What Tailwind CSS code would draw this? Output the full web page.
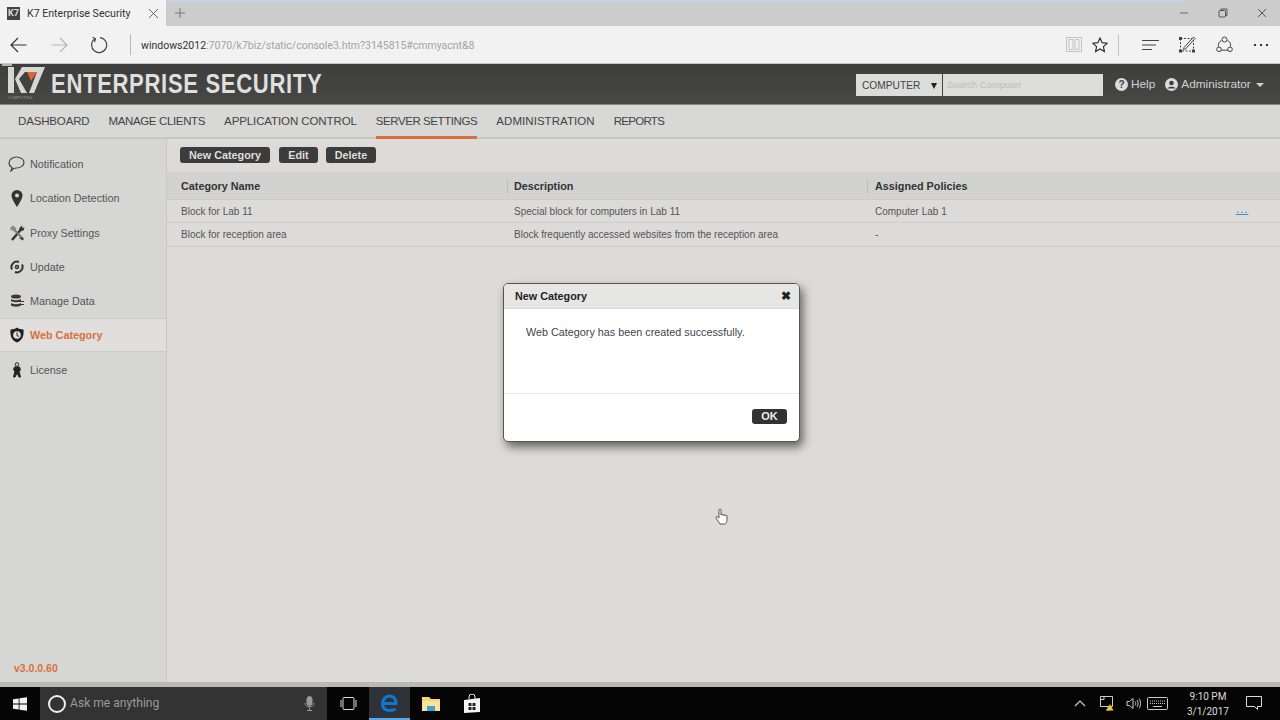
<!DOCTYPE html>
<html><head><meta charset="utf-8"><script src="https://cdn.jsdelivr.net/npm/@tailwindcss/browser@4"></script></head>
<body class="m-0">
<div class="relative w-[1280px] h-[720px] overflow-hidden flex flex-col bg-[#dcdbd9] font-['Liberation_Sans',Arial,sans-serif] text-[#444]">
  <!-- tab strip -->
  <div class="h-[26px] flex bg-[#cccccc] relative shrink-0 font-['Roboto',sans-serif]">
    <div class="absolute top-0 left-[96px] w-[1088px] h-[2px] bg-[#c3d3ea]"></div>
    <div class="relative w-[166px] h-[26px] bg-[#f2f2f2] flex items-center pl-[7px]">
      <div class="w-[13px] h-[13px] bg-[#444] flex items-center justify-center text-[9px] leading-none font-bold text-[#ddd]">K7</div>
      <span class="ml-[7px] mt-[1px] text-[10.600px] text-[#333] whitespace-nowrap">K7 Enterprise Security</span>
      <svg class="absolute left-[148px] top-[8px]" width="11" height="11" viewBox="0 0 11 11" stroke="#666" fill="none"><path d="M1 1l9 9M10 1l-9 9"/></svg>
    </div>
    <svg class="ml-[8px] mt-[7px]" width="12" height="12" viewBox="0 0 12 12" stroke="#777" fill="none"><path d="M6 1v10M1 6h10"/></svg>
    <div class="ml-auto flex items-center h-[26px]">
      <svg class="mr-[29px]" width="10" height="10" viewBox="0 0 10 10" stroke="#666" fill="none"><path d="M1 5h8"/></svg>
      <svg class="mr-[29px]" width="10" height="10" viewBox="0 0 10 10" stroke="#555" fill="none"><rect x="1" y="2.5" width="6.5" height="6.5" rx="1"/><path d="M3 2.5V1h6v6.5H7.5"/></svg>
      <svg class="mr-[13px]" width="10" height="10" viewBox="0 0 10 10" stroke="#555" fill="none"><path d="M1 1l8 8M9 1l-8 8"/></svg>
    </div>
  </div>
  <!-- address bar -->
  <div class="h-[38px] flex items-center bg-[#f2f2f2] shrink-0 relative border-b border-[#c8c8c8]">
    <svg class="ml-[10px]" width="17" height="16" viewBox="0 0 17 16" stroke="#333" stroke-width="1.2" fill="none"><path d="M16.5 8H1M8 1L1 8l7 7"/></svg>
    <svg class="ml-[24px]" width="17" height="16" viewBox="0 0 17 16" stroke="#b5b5b5" stroke-width="1.2" fill="none"><path d="M0.5 8H16M9 1l7 7-7 7"/></svg>
    <svg class="ml-[22px]" width="18" height="18" viewBox="0 0 18 18" stroke="#444" stroke-width="1.2" fill="none"><path d="M5 2.8A7.5 7.5 0 1 0 10 1.6"/><path d="M2.6 1.2L5.4 2.8 4.6 6"/></svg>
    <div class="ml-[22px] w-px h-[21px] bg-[#b8b8b8]"></div>
    <div class="ml-[10px] mt-[3px] text-[10.500px] font-['Roboto',sans-serif] whitespace-nowrap"><span class="text-[#333]">windows2012</span><span class="text-[#a3a3a3]">:7070/k7biz/static/console3.htm?3145815#cmmyacnt&amp;8</span></div>
    <div class="ml-auto flex items-center mr-[12px]">
      <svg width="16" height="15" viewBox="0 0 16 15" stroke="#c2c2c2" fill="none"><rect x="0.5" y="0.5" width="15" height="14"/><path d="M3 2.5h4v10H3zM9 2.5h4v10H9z"/></svg>
      <svg class="ml-[10px]" width="16" height="16" viewBox="0 0 16 16" stroke="#333" stroke-width="1.2" fill="none"><path d="M8 1l2.1 4.700 5 .5-3.700 3.400 1 5L8 12l-4.400 2.600 1-5L.9 6.200l5-.5z"/></svg>
      <div class="ml-[10px] w-px h-[22px] bg-[#c4c4c4]"></div>
      <svg class="ml-[23px]" width="17" height="12" viewBox="0 0 17 12" stroke="#444" fill="none"><path d="M0 1.500h17M0 6h14M0 10.500h10"/></svg>
      <svg class="ml-[20px]" width="17" height="17" viewBox="0 0 17 17" stroke="#444" fill="none"><rect x="1.500" y="2.500" width="13" height="12.500" stroke-dasharray="2 1.500"/><path d="M5 11.500L14.500 1l1.500 1.500L6.500 13 4.500 13.500z" fill="#f2f2f2"/><rect x="0.500" y="1.500" width="2" height="2" fill="#444"/><rect x="0.500" y="14" width="2" height="2" fill="#444"/><rect x="13.500" y="14" width="2" height="2" fill="#444"/></svg>
      <svg class="ml-[20px]" width="17" height="17" viewBox="0 0 17 17" stroke="#444" fill="none"><path d="M5.500 4.500A5.500 5.500 0 0 0 2.500 10.500M14.500 10.500A5.500 5.500 0 0 0 11.500 4.500M5 14.200h7"/><circle cx="8.500" cy="3.500" r="2.500"/><circle cx="3" cy="13.300" r="2.300"/><circle cx="14" cy="13.300" r="2.300"/></svg>
      <div class="ml-[21px] flex gap-[4px]"><i class="w-[2px] h-[2px] bg-[#333]"></i><i class="w-[2px] h-[2px] bg-[#333]"></i><i class="w-[2px] h-[2px] bg-[#333]"></i></div>
    </div>
  </div>
  <!-- app header -->
  <div class="h-[41px] flex items-center shrink-0 bg-gradient-to-b from-[#3e3e3d] to-[#474746] relative border-b border-[#888]">
    <svg class="shrink-0" width="46" height="40" viewBox="0 0 46 40"><rect x="2" y="0" width="10" height="2" fill="#b5b5b3"/><path d="M8 3h6v26H8z" fill="#d6d6d4"/><path d="M15 15L22 3h23L34 29h-5l8-21H25l-6 7 8 14h-6z" fill="#d6d6d4"/><path d="M27 8h10l-6 9z" fill="#d96a2c"/><text x="8" y="34.500" font-size="4" fill="#999" font-family="Liberation Sans">COMPUTING</text></svg>
    <span class="ml-[5px] text-[27px] leading-none font-bold text-[#dfdfdd] tracking-[0.8px] font-['Liberation_Sans',sans-serif] whitespace-nowrap scale-x-[0.818] origin-left">ENTERPRISE SECURITY</span>
    <div class="absolute left-[856px] top-[10px] flex items-center h-[22px]">
      <div class="w-[86px] h-[22px] bg-[#dcdcda] flex items-center pl-[6px] pt-[1px] text-[10.200px] text-[#444] relative">COMPUTER<i class="absolute left-[75px] top-[9px] w-0 h-0 border-x-[3.500px] border-x-transparent border-t-[6px] border-t-[#222]"></i></div>
      <div class="ml-px w-[160px] h-[22px] bg-[#dcdcda] flex items-center pl-[4px] text-[9.500px] text-[#bdbdbb]">Search Computer</div>
    </div>
    <div class="absolute left-[1115px] top-[12px] flex items-center text-[11.800px] text-[#cfcfcd]">
      <svg width="13" height="13" viewBox="0 0 13 13"><circle cx="6.500" cy="6.500" r="6.500" fill="#dcdcda"/><text x="6.500" y="10.200" font-size="10" font-weight="bold" text-anchor="middle" fill="#3f3f3e" font-family="Liberation Sans">?</text></svg>
      <span class="ml-[3px]">Help</span>
      <svg class="ml-[10px]" width="13" height="13" viewBox="0 0 13 13"><circle cx="6.500" cy="6.500" r="6.500" fill="#dcdcda"/><circle cx="6.500" cy="5" r="2.300" fill="#3f3f3e"/><path d="M2.500 10.500c.5-2.500 7.500-2.500 8 0z" fill="#3f3f3e"/></svg>
      <span class="ml-[3px]">Administrator</span>
      <i class="ml-[5px] mt-[1px] w-0 h-0 border-x-[4px] border-x-transparent border-t-[4px] border-t-[#cfcfcd]"></i>
    </div>
  </div>
  <!-- nav -->
  <div class="h-[34px] flex shrink-0 bg-[#d8d8d6] pl-[18px] gap-[19px] text-[11.500px] text-[#444] border-b-2 border-[#c6c6c4] whitespace-nowrap">
    <div class="pt-[8px] tracking-[-0.15px]">DASHBOARD</div>
    <div class="pt-[8px] tracking-[-0.36px]">MANAGE CLIENTS</div>
    <div class="pt-[8px] tracking-[-0.1px]">APPLICATION CONTROL</div>
    <div class="pt-[8px] h-[34px] border-b-[3px] border-[#d9703a] tracking-[-0.42px]">SERVER SETTINGS</div>
    <div class="pt-[8px] tracking-[0.06px]">ADMINISTRATION</div>
    <div class="pt-[8px] tracking-[-0.7px]">REPORTS</div>
  </div>
  <!-- body -->
  <div class="flex-1 flex min-h-0">
    <aside class="w-[167px] shrink-0 bg-[#d6d6d4] border-r border-[#c8c8c6] flex flex-col text-[10.800px] text-[#555] pt-[8px]">
      <div class="h-[34px] flex items-center pl-[8px]">
        <svg width="17" height="16" viewBox="0 0 17 16" fill="none" stroke="#444" stroke-width="1.200"><path d="M3 15l1-3.500C2 10.500 1 9 1 7c0-3.500 3.500-6 7.500-6S16 3.500 16 6.500 12.500 12 8.500 12c-1 0-2 0-3 .5z"/></svg>
        <span class="ml-[5px]">Notification</span>
      </div>
      <div class="h-[35px] flex items-center pl-[11px]">
        <svg width="12" height="17" viewBox="0 0 12 17"><path d="M6 0a5.500 5.500 0 0 0-5.500 5.500C.5 9 6 17 6 17s5.500-8 5.500-11.500A5.500 5.500 0 0 0 6 0zm0 7.500a2 2 0 1 1 0-4 2 2 0 0 1 0 4z" fill="#333"/></svg>
        <span class="ml-[7px]">Location Detection</span>
      </div>
      <div class="h-[34px] flex items-center pl-[9px]">
        <svg width="16" height="16" viewBox="0 0 16 16" fill="none"><path d="M3 15L12 4.500" stroke="#333" stroke-width="2.500"/><path d="M14 14L5 4.500" stroke="#777" stroke-width="2"/><path d="M1 3l3-2.500 3.500 3-2.500 2.500-3-1z" fill="#888"/><path d="M10 3.500l3-3 .5 2.500 2-.5-1 3-3 .5z" fill="#333"/><path d="M10 13l3-1 2 2-1.500 1.500z" fill="#444"/></svg>
        <span class="ml-[5px]">Proxy Settings</span>
      </div>
      <div class="h-[34px] flex items-center pl-[10px]">
        <svg width="14" height="14" viewBox="0 0 14 14" fill="none" stroke="#333" stroke-width="2"><path d="M2 9.500A5.500 5.500 0 0 1 9 2"/><path d="M12 4.500A5.500 5.500 0 0 1 5 12"/><circle cx="7" cy="7" r="1.500" stroke-width="1.500"/></svg>
        <span class="ml-[6px]">Update</span>
      </div>
      <div class="h-[34px] flex items-center pl-[10px]">
        <svg width="14" height="14" viewBox="0 0 14 14" fill="#3a3a3a"><ellipse cx="6" cy="2.500" rx="5" ry="2"/><path d="M1 5c1 1.500 9 1.500 10 0v2c-1 1.500-9 1.500-10 0zM1 9c1 1.500 9 1.500 10 0v2.500c-1 1.500-9 1.500-10 0z"/><path d="M8 7h6v1H8zM8 10h6v1H8z"/></svg>
        <span class="ml-[6px]">Manage Data</span>
      </div>
      <div class="h-[34px] flex items-center pl-[9px] bg-[#e0dfdd] border-y border-[#cbcbc9] font-bold text-[#d9703a]">
        <svg width="16" height="16" viewBox="0 0 16 16"><path d="M8 .5C6 2 4 2 1.500 2.500 1 8 2 13 8 15.500 14 13 15 8 14.500 2.500 12 2 10 2 8 .5z" fill="#222"/><circle cx="8" cy="8" r="3.800" fill="#e0dfdd"/><path d="M8 5.500v3l2 1" stroke="#222" fill="none"/></svg>
        <span class="ml-[5px]">Web Category</span>
      </div>
      <div class="h-[36px] flex items-center pl-[11px]">
        <svg width="12" height="16" viewBox="0 0 12 16" fill="none" stroke="#222"><circle cx="6" cy="2.500" r="1.800"/><path d="M3.500 5h5l1 3-1.500 1 1.500 6H8l-2-4-2 4H2.500L4 9 2.500 8z" fill="#222"/></svg>
        <span class="ml-[7px]">License</span>
      </div>
      <div class="mt-auto mb-[5px] pl-[14px] text-[10.500px] font-bold text-[#d9703a]">v3.0.0.60</div>
    </aside>
    <main class="flex-1 min-w-0 flex flex-col text-[10px]">
      <div class="h-[34px] flex items-start pl-[13px] pt-[8px] shrink-0 border-b border-[#d2d2d0]">
        <button class="h-[16px] w-[90px] rounded-[3px] bg-[#3c3c3c] text-[#dedede] font-bold text-[10.800px] leading-none">New Category</button>
        <button class="ml-[9px] h-[16px] w-[39px] rounded-[3px] bg-[#3c3c3c] text-[#dedede] font-bold text-[10.800px] leading-none">Edit</button>
        <button class="ml-[8px] h-[16px] w-[50px] rounded-[3px] bg-[#3c3c3c] text-[#dedede] font-bold text-[10.800px] leading-none">Delete</button>
      </div>
      <div class="h-[27px] flex items-center shrink-0 bg-[#d2d2d0] font-bold text-[10.800px] text-[#333] border-b border-[#cbcbc9]">
        <div class="w-[340px] pl-[14px]">Category Name</div>
        <div class="w-[360px] pl-[6px] border-l border-[#bbb] h-[13px] leading-[13px]">Description</div>
        <div class="pl-[7px] border-l border-[#bbb] h-[13px] leading-[13px]">Assigned Policies</div>
      </div>
      <div class="h-[23px] flex items-center pt-[1px] shrink-0 border-b border-[#cfcfcd] text-[#555] relative">
        <div class="w-[340px] pl-[14px]">Block for Lab 11</div>
        <div class="w-[361px] pl-[7px]">Special block for computers in Lab 11</div>
        <div class="pl-[7px]">Computer Lab 1</div>
        <span class="absolute left-[1069px] top-[2px] w-[12px] h-[14px] text-center text-[#4a90c8] underline text-[12px] tracking-[0.8px] leading-[14px]">...</span>
      </div>
      <div class="h-[24px] flex items-center shrink-0 border-b border-[#cfcfcd] text-[#555]">
        <div class="w-[340px] pl-[14px]">Block for reception area</div>
        <div class="w-[361px] pl-[7px]">Block frequently accessed websites from the reception area</div>
        <div class="pl-[7px]">-</div>
      </div>
    </main>
  </div>
  <div class="h-[5px] bg-[#b9b9b7] shrink-0"></div>
  <!-- taskbar -->
  <div class="h-[33px] flex items-stretch bg-[#050505] shrink-0 font-['Roboto',sans-serif]">
    <div class="w-[40px] flex items-center justify-center">
      <svg width="14" height="14" viewBox="0 0 14 14" fill="#f2f2f2"><path d="M0 2.200l5.700-.8v5.200H0zM6.500 1.300L14 .2v6.400H6.500zM0 7.400h5.700v5.200L0 11.800zM6.500 7.400H14v6.400l-7.500-1.100z"/></svg>
    </div>
    <div class="w-[287px] bg-[#333] flex items-center pl-[8px] relative">
      <span class="w-[18px] h-[18px] rounded-full border-[2.500px] border-[#eee] shrink-0"></span>
      <span class="ml-[4px] text-[12.100px] text-[#9a9a9a]">Ask me anything</span>
      <svg class="absolute left-[264px] top-[9px]" width="11" height="15" viewBox="0 0 11 15" fill="none" stroke="#999"><rect x="3" y="0.500" width="5" height="9" rx="2.500" fill="#999"/><path d="M1 7c0 5 9 5 9 0M5.500 11v3M3 14.500h5"/></svg>
    </div>
    <div class="w-[42px] flex items-center justify-center">
      <svg width="17" height="13" viewBox="0 0 17 13" fill="none" stroke="#ddd"><rect x="3" y="0.500" width="11" height="12" rx="1"/><path d="M1 3v7M16 3v7"/></svg>
    </div>
    <div class="w-[41px] bg-[#2f3338] border-b-2 border-[#5aa9e6] flex items-center justify-center">
      <svg width="18" height="18" viewBox="0 0 18 18" fill="none" stroke="#0f78d4" stroke-width="3"><path d="M3 9.500h12c0-5-3-7.500-6.500-7.500S1.500 5 1.500 10 5 16.500 9 16.500c2 0 4-.5 5.500-1.500"/></svg>
    </div>
    <div class="w-[41px] flex items-center justify-center">
      <svg width="18" height="15" viewBox="0 0 18 15"><path d="M0 1h7l2 2h9v12H0z" fill="#f4d67a"/><path d="M0 5h18v10H0z" fill="#f8e29a"/><rect x="5" y="10" width="8" height="5" fill="#3ba3d8"/></svg>
    </div>
    <div class="w-[41px] flex items-center justify-center">
      <svg width="18" height="20" viewBox="0 0 18 20"><path d="M6 5V3a3 3 0 0 1 6 0v2" stroke="#eee" fill="none"/><path d="M1 6l16-2v14L1 19z" fill="#f4f4f4"/><path d="M5.500 9h3v3h-3zM9.500 9h3v3h-3zM5.500 13h3v3h-3zM9.500 13h3v3h-3z" fill="#222"/></svg>
    </div>
    <div class="ml-auto flex items-center relative w-[212px] text-[#ddd]">
      <svg class="absolute left-[6px] top-[12px]" width="12" height="8" viewBox="0 0 12 8" fill="none" stroke="#ccc" stroke-width="1.200"><path d="M1 7l5-5 5 5"/></svg>
      <svg class="absolute left-[32px] top-[9px]" width="15" height="15" viewBox="0 0 15 15" fill="none" stroke="#ccc"><path d="M.5.500h12v10H.5zM4 .5v3H1"/><path d="M6 14h4M8 10.500V14"/><path d="M10 8l3.500 6.500h-7z" fill="#f2c230" stroke="none"/></svg>
      <svg class="absolute left-[58px] top-[10px]" width="15" height="13" viewBox="0 0 15 13" fill="none" stroke="#ccc"><path d="M1 4.500h2.500L7 1.500v10l-3.500-3H1zM9 4.500c1 1 1 3 0 4M11 3c1.500 2 1.500 5 0 7M13 1.500c2 2.500 2 7.500 0 10"/></svg>
      <svg class="absolute left-[79px] top-[10px]" width="21" height="13" viewBox="0 0 21 13" fill="none" stroke="#ccc"><rect x="0.500" y="0.500" width="20" height="12" rx="1"/><path d="M3 4h15M3 6.500h15" stroke-dasharray="1 1"/><path d="M6 9.500h9"/></svg>
      <div class="absolute left-[109px] top-[0px] w-[62px] text-center text-[10px] leading-[15px] pt-[2px] text-[#ddd]">9:10 PM<br>3/1/2017</div>
      <svg class="absolute left-[178px] top-[9px]" width="16" height="15" viewBox="0 0 16 15" fill="none" stroke="#ddd"><path d="M.5.500h15v10h-4v3l-3-3H.5z"/></svg>
    </div>
  </div>
  <!-- dialog -->
  <div class="absolute left-[503px] top-[283px] w-[297px] h-[159px] rounded-[5px] bg-white border border-[#555] shadow-[3px_5px_10px_rgba(0,0,0,0.55)] overflow-hidden flex flex-col">
    <div class="h-[25px] bg-[#e6e6e5] border-b border-[#d8d8d8] flex items-center justify-between pl-[11px] pr-[8px] text-[10.800px] font-bold text-[#222] shrink-0"><span>New Category</span><span class="text-[12px]">✖</span></div>
    <div class="h-[85px] pl-[22px] pt-[15px] text-[10.800px] text-[#444] border-b border-[#eaeaea] shrink-0">Web Category has been created successfully.</div>
    <div class="flex justify-end pr-[12px] pt-[15px]"><button class="w-[35px] h-[15px] rounded-[3px] bg-[#333] text-[#eee] font-bold text-[11px] leading-none">OK</button></div>
  </div>
  <!-- cursor -->
  <svg class="absolute left-[715px] top-[508px]" width="13" height="17" viewBox="0 0 13 17"><path d="M4 2c0-1.200 2-1.200 2 0V7c0-1 2-1 2 0v.5c0-1 2-1 2 0V8c0-1 2-1 2 0v4c0 2-1 3-2 4H5L1 10c-.8-1 .8-2 1.600-1L4 10z" fill="#fff" stroke="#333" stroke-width="0.800"/></svg>
</div>
</body></html>
